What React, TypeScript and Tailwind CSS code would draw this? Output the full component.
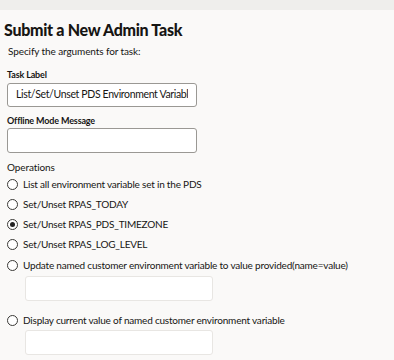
export default function App() {
  const ops = [
    "List all environment variable set in the PDS",
    "Set/Unset RPAS_TODAY",
    "Set/Unset RPAS_PDS_TIMEZONE",
    "Set/Unset RPAS_LOG_LEVEL",
  ];

  const Radio = ({ checked = false }: { checked?: boolean }) => (
    <span className="flex h-[11px] w-[11px] shrink-0 items-center justify-center rounded-full border border-[#3a3936] bg-white">
      {checked && <span className="h-[5px] w-[5px] rounded-full bg-[#222]" />}
    </span>
  );

  return (
    <div className="h-[360px] w-[394px] overflow-hidden bg-[#faf9f8] font-['Lato',sans-serif] text-[#161513]">
      <div className="h-[10px] bg-[#efeeec]" />
      <h1 className="pl-[4px] pt-[9px] text-[16px] font-black leading-[22px] tracking-[-0.3px]">Submit a New Admin Task</h1>
      <p className="pl-[8px] pt-[3px] text-[10px] leading-[14px] tracking-[-0.1px]">Specify the arguments for task:</p>

      <div className="px-[7px] pt-[11px]">
        <label className="block text-[9px] font-bold leading-[12px] tracking-[-0.15px]">Task Label</label>
        <div className="mt-[2px] flex h-[24px] w-[190px] items-center rounded-[3px] border border-[#9a9894] bg-white px-[8px] text-[10.5px] tracking-[-0.35px]">
          <div className="flex-1 overflow-hidden whitespace-nowrap">List/Set/Unset PDS Environment Variable</div>
        </div>

        <label className="mt-[8px] block text-[9px] font-bold leading-[12px] tracking-[-0.15px]">Offline Mode Message</label>
        <div className="mt-[1px] h-[25px] w-[190px] rounded-[3px] border border-[#9a9894] bg-white" />

        <div className="mt-[8px] text-[10px] leading-[13px] tracking-[-0.1px]">Operations</div>
        <div className="flex flex-col text-[10px] leading-[14px] tracking-[-0.2px]">
          {ops.map((o, i) => (
            <div key={o} className="flex h-[20px] items-center gap-[5px]">
              <Radio checked={i === 2} />
              <span>{o}</span>
            </div>
          ))}
          <div className="mt-[1px] flex h-[20px] items-center gap-[5px]">
            <Radio />
            <span className="whitespace-nowrap">Update named customer environment variable to value provided(name=value)</span>
          </div>
          <div className="ml-[18px] mt-[1px] h-[25px] w-[188px] rounded-[3px] border border-[#e8e6e3] bg-white" />
          <div className="mt-[9px] flex h-[20px] items-center gap-[5px]">
            <Radio />
            <span>Display current value of named customer environment variable</span>
          </div>
          <div className="ml-[18px] h-[25px] w-[188px] rounded-[3px] border border-[#e8e6e3] bg-white" />
        </div>
      </div>
    </div>
  );
}
